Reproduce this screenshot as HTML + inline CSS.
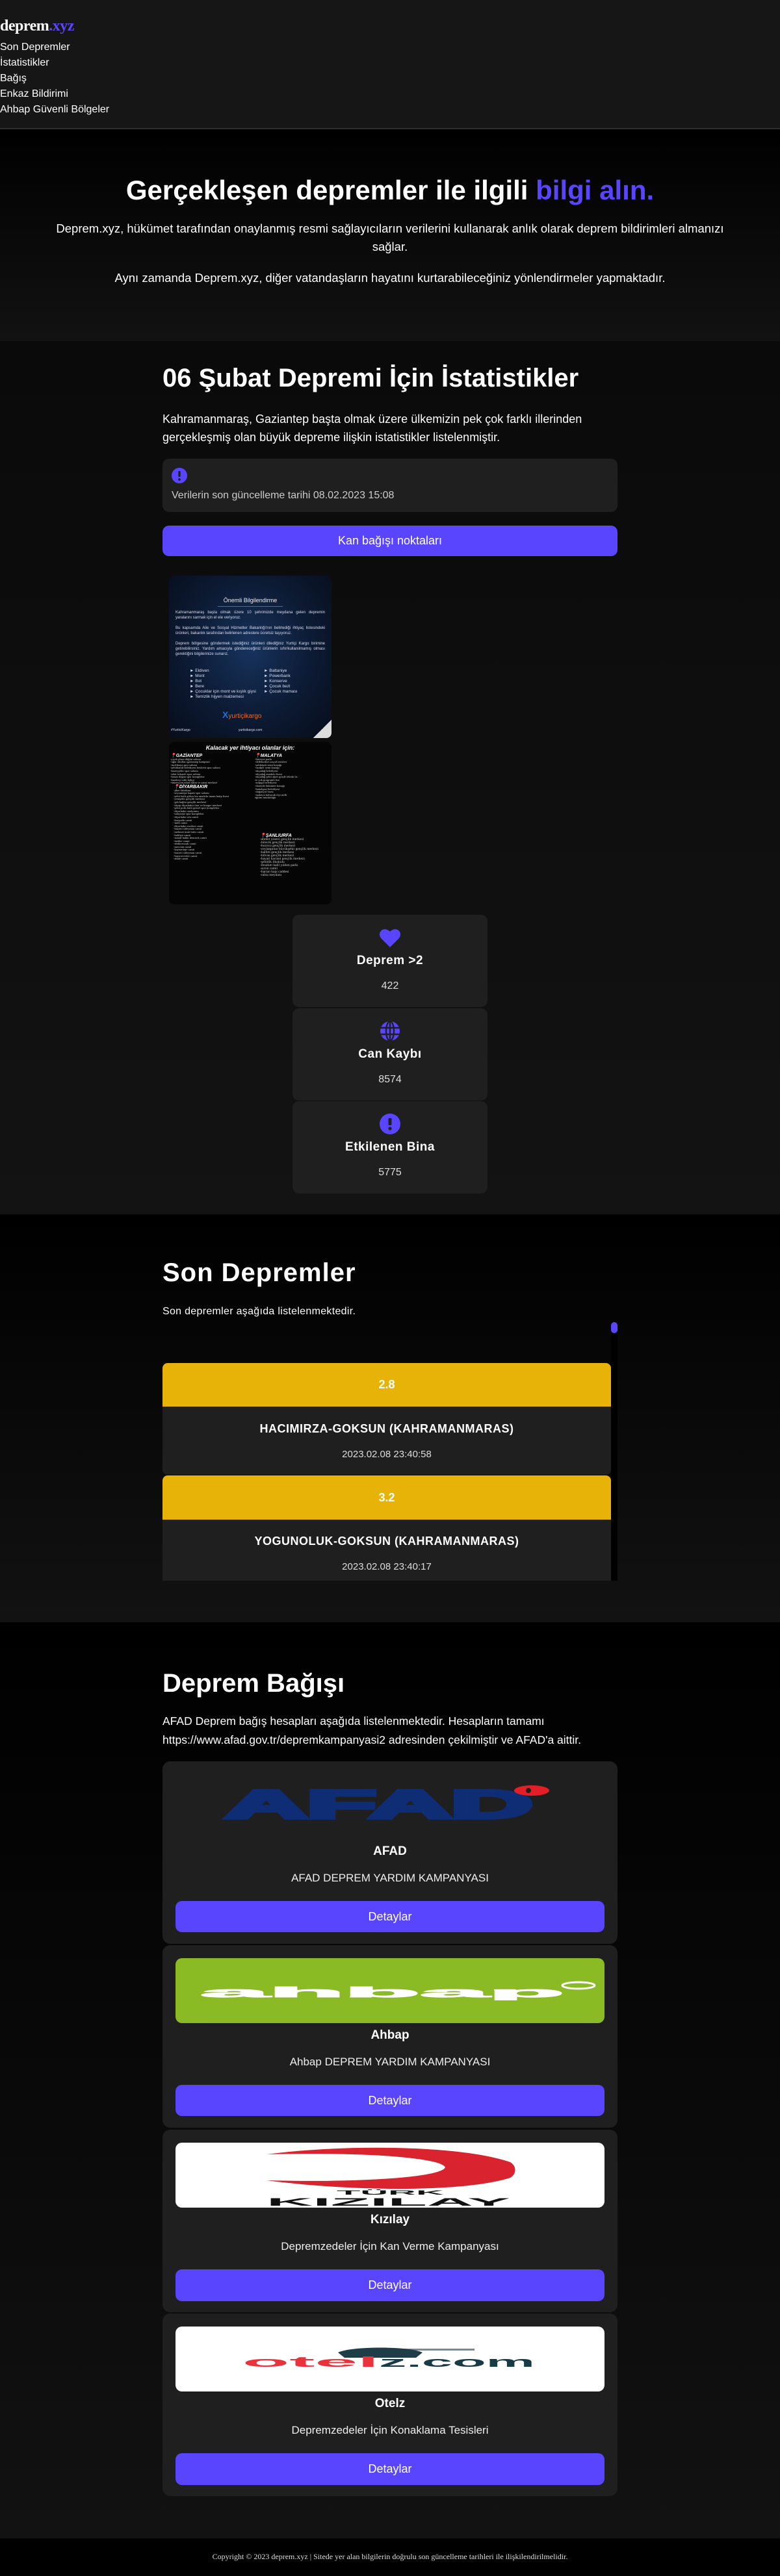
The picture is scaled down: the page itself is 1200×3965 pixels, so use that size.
<!DOCTYPE html>
<html><head><meta charset="utf-8">
<style>
*{box-sizing:border-box;margin:0;padding:0}
body{width:1200px;height:3965px;background:#000;color:#fff;font-family:"Liberation Sans",Arial,sans-serif;overflow:hidden;position:relative}
.abs{position:absolute}
header{position:absolute;left:0;top:0;width:1200px;height:199px;background:#161616;border-bottom:2px solid #2e2e2e}
.logo{position:absolute;left:0;top:27px;font-family:"Liberation Serif",serif;font-weight:bold;font-size:24px;color:#fff;letter-spacing:-0.5px}
.logo span{color:#5a45fe}
.nav{position:absolute;left:0;top:61px;font-size:16px;line-height:24px;color:#fff}
.sec{position:absolute;left:0;width:1200px;background:linear-gradient(#000,#121212)}
.c{text-align:center}
h2{font-size:40px;font-weight:bold;color:#fff;position:absolute;left:250px;white-space:nowrap}
.btn{position:absolute;background:#5a45fe;border-radius:10px;color:#fff;text-align:center;font-size:18px}
.stat{position:absolute;left:450px;width:300px;height:142px;background:#1f1f1f;border-radius:10px;text-align:center}
.stat b{position:absolute;left:0;right:0;top:60px;font-size:19px;letter-spacing:.5px}
.stat i{position:absolute;left:0;right:0;top:101px;font-style:normal;font-size:16px;color:#ddd}
.stat svg{position:absolute;left:134px;top:22px}
.card{position:absolute;left:250px;width:700px;height:281px;background:#1f1f1f;border-radius:12px;text-align:center}
.card .im{position:absolute;left:20px;top:20px;width:660px;height:100px;border-radius:10px;overflow:hidden}
.card .t{position:absolute;left:0;right:0;top:128px;font-size:19px;font-weight:bold}
.card .s{position:absolute;left:0;right:0;top:170px;font-size:17px;color:#eee}
.card .btn{left:20px;top:215px;width:660px;height:48px;line-height:48px}
.img{position:absolute;left:260px;width:250px;height:250px;border-radius:8px;overflow:hidden}
</style></head><body>
<header>
<div class="logo">deprem<span>.xyz</span></div>
<div class="nav">Son Depremler<br>İstatistikler<br>Bağış<br>Enkaz Bildirimi<br>Ahbap Güvenli Bölgeler</div>
</header>

<div class="sec" style="top:201px;height:324px">
<div class="abs c" style="left:0;width:1200px;top:68px;font-size:42px;font-weight:bold;white-space:nowrap">Gerçekleşen depremler ile ilgili <span style="color:#5a45fe">bilgi alın.</span></div>
<div class="abs c" style="left:70px;width:1060px;top:137px;font-size:18.5px;line-height:28px;color:#fff">Deprem.xyz, hükümet tarafından onaylanmış resmi sağlayıcıların verilerini kullanarak anlık olarak deprem bildirimleri almanızı sağlar.</div>
<div class="abs c" style="left:0;width:1200px;top:213px;font-size:18.5px;line-height:28px">Aynı zamanda Deprem.xyz, diğer vatandaşların hayatını kurtarabileceğiniz yönlendirmeler yapmaktadır.</div>
</div>

<div class="sec" style="top:525px;height:1344px;background:linear-gradient(#0a0a0a,#131313)">
<h2 style="top:35px">06 Şubat Depremi İçin İstatistikler</h2>
<div class="abs" style="left:250px;top:106px;width:700px;font-size:18px;line-height:28px">Kahramanmaraş, Gaziantep başta olmak üzere ülkemizin pek çok farklı illerinden gerçekleşmiş olan büyük depreme ilişkin istatistikler listelenmiştir.</div>
<div class="abs" style="left:250px;top:181px;width:700px;height:82px;background:#1f1f1f;border-radius:10px">
<svg class="abs" style="left:14px;top:14px" width="24" height="24" viewBox="0 0 24 24"><circle cx="12" cy="12" r="12" fill="#5a45fe"/><rect x="10.3" y="5" width="3.4" height="9" rx="1.2" fill="#1f1f1f"/><circle cx="12" cy="18" r="1.9" fill="#1f1f1f"/></svg>
<div class="abs" style="left:14px;top:48px;font-size:16px;color:#ccc">Verilerin son güncelleme tarihi 08.02.2023 15:08</div>
</div>
<div class="btn" style="left:250px;top:284px;width:700px;height:47px;line-height:47px">Kan bağışı noktaları</div>
</div>

<div class="img" style="top:886px;background:radial-gradient(ellipse at 50% 45%,#17335d 0%,#0c1a33 55%,#070d1a 100%);font-size:6px;color:#dde">
<div class="abs c" style="left:0;width:250px;top:33px;font-size:9px;color:#eee">Önemli Bilgilendirme</div>
<div class="abs" style="left:75px;top:47px;width:100px;height:1px;background:#667"></div>
<div class="abs" style="left:10px;top:53px;width:230px;line-height:8px;text-align:justify">Kahramanmaraş başta olmak üzere 10 şehrimizde meydana gelen depremin yaralarını sarmak için el ele veriyoruz.<br><br>Bu kapsamda Aile ve Sosyal Hizmetler Bakanlığı'nın belirlediği ihtiyaç listesindeki ürünleri, bakanlık tarafından belirlenen adreslere ücretsiz taşıyoruz.<br><br>Deprem bölgesine göndermek istediğiniz ürünleri dilediğiniz Yurtiçi Kargo birimine getirebilirsiniz. Yardım amacıyla göndereceğiniz ürünlerin sıfır/kullanılmamış olması gerektiğini bilgilerinize sunarız.</div>
<div class="abs" style="left:32px;top:143px;line-height:8px;font-size:6.5px">► Eldiven<br>► Mont<br>► Bot<br>► Bere<br>► Çocuklar için mont ve kışlık giysi<br>► Temizlik hijyen malzemesi</div>
<div class="abs" style="left:146px;top:143px;line-height:8px;font-size:6.5px">► Battaniye<br>► Powerbank<br>► Konserve<br>► Çocuk bezi<br>► Çocuk maması</div>
<div class="abs" style="left:82px;top:206px;font-size:14px;font-weight:bold;color:#1e6fd9">X<span style="color:#f26a21;font-size:10px;font-weight:normal">yurtiçikargo</span></div>
<div class="abs" style="left:3px;top:235px;font-size:5px">#YurticiKargo</div>
<div class="abs" style="left:107px;top:235px;font-size:5px">yurticikargo.com</div>
<div class="abs" style="left:222px;top:222px;width:28px;height:28px;background:linear-gradient(135deg,transparent 50%,#ddd 50%)"></div>
</div>
<div class="img" style="top:1142px;background:#050505;font-size:4.5px;color:#ccc;font-family:'Liberation Serif',serif">
<div class="abs c" style="left:0;width:250px;top:4px;font-size:9px;font-weight:bold;font-style:italic;font-family:'Liberation Sans',sans-serif;color:#fff">Kalacak yer ihtiyacı olanlar için:</div>
<div class="abs" style="left:2px;top:20px;width:120px;line-height:4.6px"><b style="font-size:7px;font-family:'Liberation Sans';font-style:italic;color:#fff">📍GAZİANTEP</b><br>-çiçek plaza düğün salonu<br>-uğur okulları gaziantep kampüsü<br>-incilikaya spor salonu<br>-şehitkamil belediyesi beykent spor salonu<br>-kuzeyşehir spor salonu<br>-talat özkarslı spor salonu<br>-hasan doğan spor kompleksi<br>-karakeçi sıklı bahçe<br>-müzeyyen erkul bilim ve sanat merkezi</div>
<div class="abs" style="left:132px;top:20px;width:118px;line-height:4.6px"><b style="font-size:7px;font-family:'Liberation Sans';font-style:italic;color:#fff">📍MALATYA</b><br>-hürriyet parkı<br>-dedekorkut sosyal tesisleri<br>-salıköprü semt konağı<br>-özalper semt konağı<br>-akçadağ belediyesi<br>-akçadağ anadolu lisesi<br>-akçadağ şehit alper gözde teknik lis<br>ve çok programlı lise<br>-arapgir belediyesi<br>-darende hükümet konağı<br>-battalgazi belediyesi<br>-doğanyol lisesi<br>-malatya kubucak ilçe milli<br>eğitim müdürlüğü</div>
<div class="abs" style="left:7px;top:68px;width:160px;line-height:4.6px"><b style="font-size:7px;font-family:'Liberation Sans';font-style:italic;color:#fff">📍DİYARBAKIR</b><br>-jiber fabrikası<br>-seyrantepe kapalı spor salonu<br>-şehit halit gülser kız anadolu imam hatip lisesi<br>-yenişehir gençlik merkezi<br>-gsb bağlar gençlik merkezi<br>-tüyap diyarbakır fuar ve kongre merkezi<br>-şehit polis halit gürsel spor kompleksi<br>-diyarbakır stadyumu<br>-talaytepe spor kompleksi<br>-diyarbakır ulu camii<br>-kurşunlu camii<br>-fatih camii<br>-diyarbakır merkez camii<br>-hazreti süleyman camii<br>-mehmet ümit balcı camii<br>-haliliye camii<br>-ismail hakkı demirok camii<br>-mekke camii<br>-abdürrezzak camii<br>-mervani camii<br>-kaynartepe camii<br>-hazreti süleyman camii<br>-hayırseverler camii<br>-abide camii</div>
<div class="abs" style="left:140px;top:142px;width:110px;line-height:5px;font-size:5.5px"><b style="font-size:7px;font-family:'Liberation Sans';font-style:italic;color:#fff">📍ŞANLIURFA</b><br>-ahmet yesevi gençlik merkezi<br>-birecik gençlik merkezi<br>-bozova gençlik merkezi<br>-ceylanpınar büyükşehir gençlik merkezi<br>-halfeti gençlik merkezi<br>-hilvan gençlik merkezi<br>-hayati harrani gençlik merkezi<br>-şehitlik ilkokulu<br>-ibrahim halil yıldım parkı<br>-sırrın camii<br>-harran kapı caddesi<br>-rabia meydanı</div>
</div>

<div class="stat" style="top:1408px"><svg width="32" height="28" viewBox="0 0 32 28"><path d="M16 28 L3 15 C-1 11 -1 5 3 2 C7 -1 12 0 16 4 C20 0 25 -1 29 2 C33 5 33 11 29 15 Z" fill="#5a45fe"/></svg><b>Deprem &gt;2</b><i>422</i></div>
<div class="stat" style="top:1552px"><svg width="32" height="32" viewBox="0 0 32 32" style="top:19px"><circle cx="16" cy="16" r="15" fill="#5a45fe"/><g stroke="#1f1f1f" stroke-width="2.4" fill="none"><ellipse cx="16" cy="16" rx="6" ry="15"/><line x1="1" y1="11" x2="31" y2="11"/><line x1="1" y1="21" x2="31" y2="21"/><line x1="16" y1="1" x2="16" y2="31"/></g></svg><b>Can Kaybı</b><i>8574</i></div>
<div class="stat" style="top:1695px"><svg width="32" height="32" viewBox="0 0 32 32" style="top:19px"><circle cx="16" cy="16" r="16" fill="#5a45fe"/><rect x="13.5" y="7" width="5" height="11" rx="1.5" fill="#1f1f1f"/><circle cx="16" cy="23" r="2.6" fill="#1f1f1f"/></svg><b>Etkilenen Bina</b><i>5775</i></div>

<div class="sec" style="top:1869px;height:628px">
<h2 style="top:68px;letter-spacing:1px">Son Depremler</h2>
<div class="abs" style="left:250px;top:141px;font-size:16px;letter-spacing:.3px">Son depremler aşağıda listelenmektedir.</div>
<div class="abs" style="left:250px;top:166px;width:700px;height:398px;overflow:hidden">
<div class="abs" style="left:690px;top:0;width:10px;height:398px;background:#000"></div>
<div class="abs" style="left:690px;top:0;width:10px;height:17px;background:#5a45fe;border-radius:5px"></div>
<div class="abs" style="left:0;top:63px;width:690px;height:172px;background:#1f1f1f;border-radius:8px">
<div class="abs c" style="left:0;top:0;width:690px;height:67px;line-height:67px;background:#e8b308;border-radius:8px 8px 0 0;font-weight:bold;font-size:18px">2.8</div>
<div class="abs c" style="left:0;top:91px;width:690px;font-weight:bold;font-size:18px;letter-spacing:.5px">HACIMIRZA-GOKSUN (KAHRAMANMARAS)</div>
<div class="abs c" style="left:0;top:132px;width:690px;font-size:15px;color:#ddd">2023.02.08 23:40:58</div>
</div>
<div class="abs" style="left:0;top:236px;width:690px;height:172px;background:#1f1f1f;border-radius:8px">
<div class="abs c" style="left:0;top:0;width:690px;height:68px;line-height:68px;background:#e8b308;border-radius:8px 8px 0 0;font-weight:bold;font-size:18px">3.2</div>
<div class="abs c" style="left:0;top:91px;width:690px;font-weight:bold;font-size:18px;letter-spacing:.5px">YOGUNOLUK-GOKSUN (KAHRAMANMARAS)</div>
<div class="abs c" style="left:0;top:132px;width:690px;font-size:15px;color:#ddd">2023.02.08 23:40:17</div>
</div>
</div>
</div>

<div class="sec" style="top:2497px;height:1410px">
<h2 style="top:72px">Deprem Bağışı</h2>
<div class="abs" style="left:250px;top:138px;width:720px;font-size:17.5px;line-height:29px">AFAD Deprem bağış hesapları aşağıda listelenmektedir. Hesapların tamamı https://www.afad.gov.tr/depremkampanyasi2 adresinden çekilmiştir ve AFAD'a aittir.</div>
</div>

<div class="card" style="top:2711px">
<div class="im"><svg width="660" height="100" viewBox="0 0 660 100"><text x="77" y="64" font-family="Liberation Sans" font-weight="900" font-size="58" fill="#0f2d74" stroke="#0f2d74" stroke-width="5" textLength="472" lengthAdjust="spacingAndGlyphs" transform="scale(1,1.05)">AFAD</text><ellipse cx="548" cy="25" rx="27" ry="8" fill="#e41e26"/><circle cx="543" cy="25" r="4" fill="#1f1f1f"/></svg></div>
<div class="t">AFAD</div><div class="s">AFAD DEPREM YARDIM KAMPANYASI</div><div class="btn">Detaylar</div></div>

<div class="card" style="top:2994px">
<div class="im" style="background:#8aba24"><svg width="660" height="100" viewBox="0 0 660 100"><text x="38" y="120" font-family="Liberation Sans" font-weight="bold" font-size="44" fill="#fff" stroke="#fff" stroke-width="2" textLength="560" lengthAdjust="spacingAndGlyphs" transform="scale(1,0.5)">ahbap</text><ellipse cx="620" cy="42" rx="25" ry="5" fill="none" stroke="#fff" stroke-width="3"/></svg></div>
<div class="t">Ahbap</div><div class="s">Ahbap DEPREM YARDIM KAMPANYASI</div><div class="btn">Detaylar</div></div>

<div class="card" style="top:3278px">
<div class="im" style="background:#fff"><svg width="660" height="100" viewBox="0 0 660 100"><path d="M140 18 C260 2 440 4 515 30 C525 36 525 48 515 54 C440 78 260 74 140 58 C300 62 410 52 415 38 C410 24 300 14 140 18 Z" fill="#d9232e"/><text x="248" y="80" font-family="Liberation Sans" font-weight="bold" font-size="9" fill="#111" textLength="165" lengthAdjust="spacingAndGlyphs">TÜRK</text><text x="140" y="97" font-family="Liberation Sans" font-weight="bold" font-size="17" fill="#111" textLength="375" lengthAdjust="spacingAndGlyphs">KIZILAY</text></svg></div>
<div class="t">Kızılay</div><div class="s">Depremzedeler İçin Kan Verme Kampanyası</div><div class="btn" style="height:49px;line-height:49px">Detaylar</div></div>

<div class="card" style="top:3561px">
<div class="im" style="background:#fff"><svg width="660" height="100" viewBox="0 0 660 100"><path d="M250 40 C270 30 360 30 380 40 L370 48 L260 48 Z" fill="#1f3d46"/><rect x="290" y="34" width="170" height="3" fill="#1f3d46" opacity=".6"/><text x="103" y="62" font-family="Liberation Sans" font-weight="bold" font-size="22" fill="#e8323c" textLength="210" lengthAdjust="spacingAndGlyphs">otel</text><text x="313" y="62" font-family="Liberation Sans" font-weight="bold" font-size="22" fill="#173a45" textLength="240" lengthAdjust="spacingAndGlyphs">z.com</text></svg></div>
<div class="t">Otelz</div><div class="s">Depremzedeler İçin Konaklama Tesisleri</div><div class="btn" style="height:49px;line-height:49px">Detaylar</div></div>

<div class="abs c" style="left:0;top:3907px;width:1200px;height:58px;background:#000;font-family:'Liberation Serif',serif;font-size:12px;color:#ddd;line-height:56px">Copyright © 2023 deprem.xyz | Sitede yer alan bilgilerin doğrulu son güncelleme tarihleri ile ilişkilendirilmelidir.</div>
</body></html>
